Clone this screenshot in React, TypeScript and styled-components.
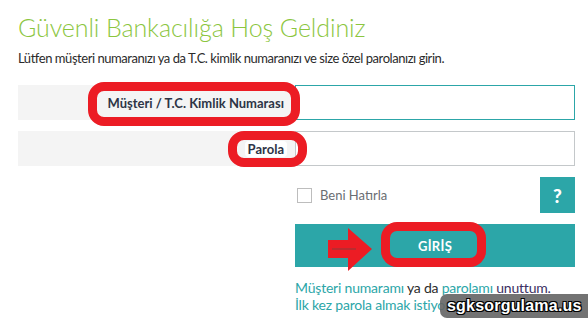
import React from "react";
import styled, { createGlobalStyle } from "styled-components";

const Global = createGlobalStyle`
  html, body { margin: 0; padding: 0; background: #fff; }
  body { font-family: Lato, "Open Sans", sans-serif; }
`;

const TEAL = "#2ca6a8";
const RED = "#ec1c24";

const Page = styled.div`
  position: relative;
  width: 588px;
  height: 322px;
  overflow: hidden;
  padding: 0 13px 0 18px;
  box-sizing: border-box;
`;

const Title = styled.h1`
  margin: 0;
  padding-top: 10px;
  font-family: Lato, sans-serif;
  font-weight: 300;
  font-size: 25px;
  line-height: 34px;
  letter-spacing: -0.1px;
  color: #8cc63f;
  white-space: nowrap;
`;

const Subtitle = styled.p`
  margin: 6px 0 0;
  font-size: 13px;
  line-height: 16px;
  letter-spacing: -0.45px;
  color: #2b2b2b;
  white-space: nowrap;
`;

const Form = styled.div`
  margin-top: 19px;
  display: grid;
  grid-template-columns: 277px 280px;
  row-gap: 11px;
`;

const Label = styled.div`
  background: #f4f4f4;
  height: 35px;
  display: flex;
  align-items: center;
  justify-content: flex-end;
  padding-right: 11px;
  font-size: 13px;
  font-weight: 700;
  color: #2d3446;
`;

const LabelText = styled.span<{ $highlight?: boolean }>`
  background: ${(p) => (p.$highlight ? "#fff" : "transparent")};
  border-radius: 4px;
  padding: 0 ${(p) => (p.$highlight ? "3px" : "0")};
  margin-right: ${(p) => (p.$highlight ? "-3px" : "0")};
`;

const Input = styled.input<{ $focused?: boolean }>`
  box-sizing: border-box;
  height: 35px;
  width: 280px;
  margin: 0;
  border: 1px solid ${(p) => (p.$focused ? TEAL : "#c4c8ca")};
  background: #fff;
  outline: none;
  padding: 0 10px;
`;

const Empty = styled.div``;

const RememberRow = styled.div`
  display: flex;
  align-items: center;
  justify-content: space-between;
  height: 36px;
`;

const CheckLabel = styled.label`
  display: flex;
  align-items: center;
  gap: 8px;
  padding-left: 2px;
  font-size: 13px;
  color: #6a6d72;
`;

const Box = styled.span`
  width: 15px;
  height: 15px;
  box-sizing: border-box;
  border: 1px solid #bdbdbd;
  background: #fff;
`;

const HelpButton = styled.button`
  width: 35px;
  height: 36px;
  border: 0;
  margin: 0;
  background: ${TEAL};
  color: #fff;
  font-family: Lato, sans-serif;
  font-weight: 900;
  font-size: 19px;
  padding: 0;
`;

const LoginButton = styled.button`
  width: 280px;
  height: 43px;
  border: 0;
  margin: 0;
  background: ${TEAL};
  color: #fff;
  font-family: Lato, sans-serif;
  font-weight: 700;
  font-size: 13px;
  letter-spacing: 0.3px;
`;

const Links = styled.div`
  margin-top: 1px;
  font-size: 14px;
  line-height: 17px;
  letter-spacing: -0.2px;
  color: #2b2b2b;
  white-space: nowrap;
`;

const Link = styled.a<{ $visited?: boolean }>`
  color: ${(p) => (p.$visited ? "#3b2f63" : TEAL)};
  text-decoration: none;
`;

const Ring = styled.div`
  position: absolute;
  box-sizing: border-box;
  border: 9px solid ${RED};
  border-radius: 16px;
  pointer-events: none;
`;

const Arrow = styled.svg`
  position: absolute;
  left: 328px;
  top: 228px;
`;

const Watermark = styled.div`
  position: absolute;
  left: 440px;
  top: 294px;
  width: 160px;
  height: 24px;
  border-radius: 7px;
  background: rgba(100, 100, 100, 0.9);
  padding-left: 7px;
  box-sizing: border-box;
  font-family: "Liberation Sans", Arial, sans-serif;
  font-weight: 700;
  font-size: 16px;
  line-height: 24px;
  color: #fff;
  letter-spacing: 0.2px;
  white-space: nowrap;
  text-shadow: 1px 1px 0 #000, -1px -1px 0 #000, 1px -1px 0 #000, -1px 1px 0 #000;
`;

export default function App() {
  return (
    <>
      <Global />
      <Page>
        <Title>Güvenli Bankacılığa Hoş Geldiniz</Title>
        <Subtitle>
          Lütfen müşteri numaranızı ya da T.C. kimlik numaranızı ve size özel parolanızı girin.
        </Subtitle>
        <Form>
          <Label>
            <LabelText>Müşteri / T.C. Kimlik Numarası</LabelText>
          </Label>
          <Input $focused />
          <Label>
            <LabelText $highlight>Parola</LabelText>
          </Label>
          <Input type="password" />
          <Empty />
          <RememberRow>
            <CheckLabel>
              <Box />
              Beni Hatırla
            </CheckLabel>
            <HelpButton>?</HelpButton>
          </RememberRow>
          <Empty />
          <LoginButton>GİRİŞ</LoginButton>
          <Empty />
          <Links>
            <Link>Müşteri numaramı</Link> ya da <Link>parolamı</Link>{" "}
            <Link $visited>unuttum.</Link>
            <br />
            <Link>İlk kez parola almak istiyorum</Link>
          </Links>
        </Form>

        <Ring style={{ left: 88, top: 82, width: 212, height: 44 }} />
        <Ring style={{ left: 228, top: 131, width: 79, height: 36 }} />
        <Ring style={{ left: 381, top: 222, width: 105, height: 45 }} />
        <Arrow width="46" height="44" viewBox="0 0 46 44">
          <polygon points="0,12 20,12 20,0 44,21 20,43 20,30 0,30" fill={RED} />
          <line x1="4" y1="21" x2="28" y2="21" stroke="#8a3a3a" strokeWidth="1" />
        </Arrow>
        <Watermark>sgksorgulama.us</Watermark>
      </Page>
    </>
  );
}
